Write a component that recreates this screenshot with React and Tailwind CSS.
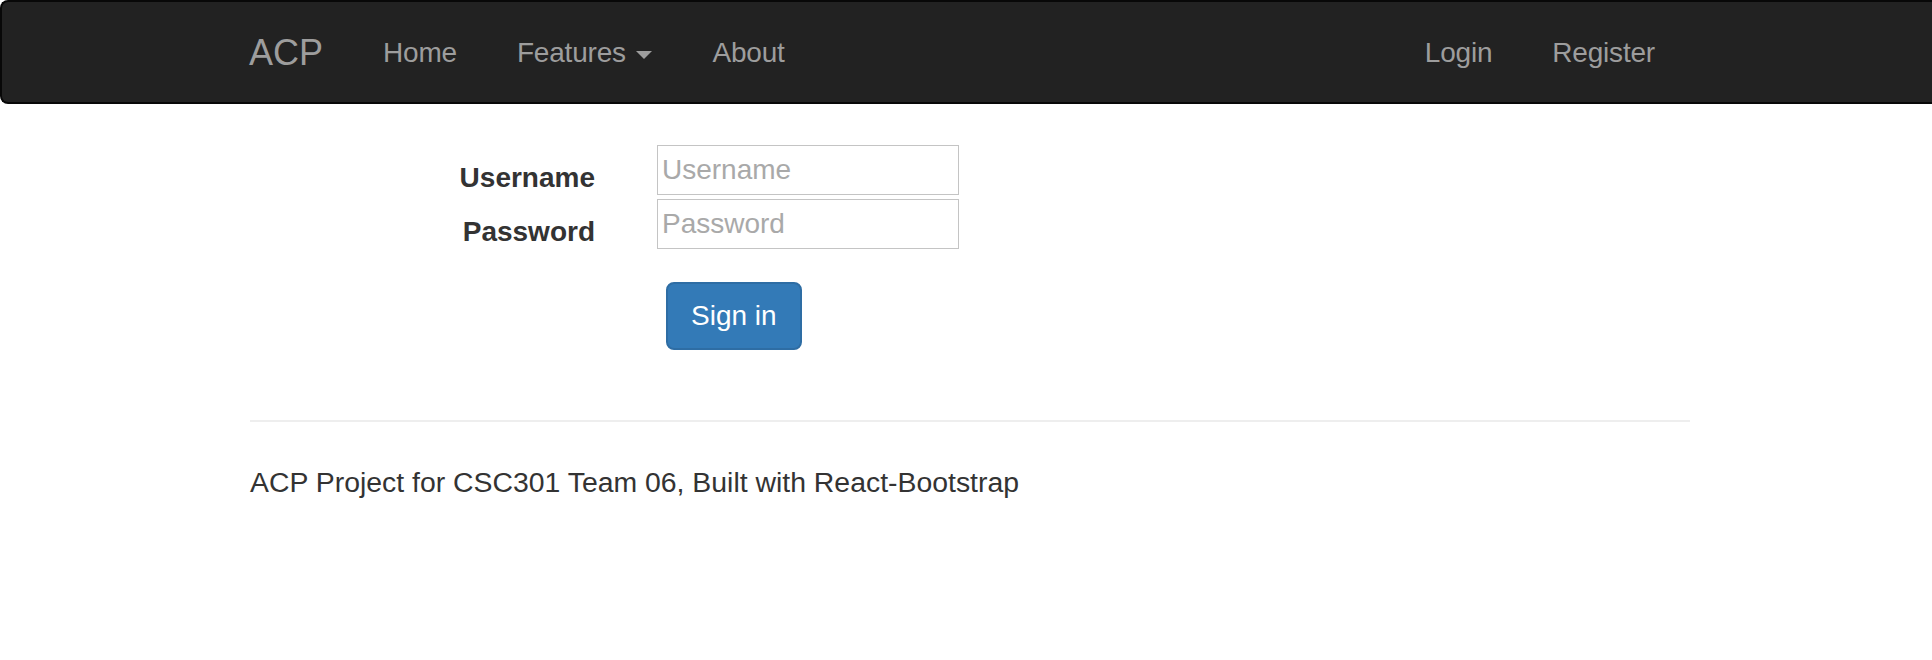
import { Fragment } from "react";

const leftLinks = [
  { label: "Home" },
  { label: "Features", dropdown: true },
  { label: "About" },
];

const rightLinks = [{ label: "Login" }, { label: "Register" }];

function NavLink({ label, dropdown }) {
  return (
    <li>
      <a
        href="#"
        className="block px-[30px] pt-[31px] pb-[29px] text-[28px] leading-[40px] tracking-[-0.2px] text-[#9d9d9d] no-underline"
      >
        {label}
        {dropdown ? (
          <Fragment>
            {" "}
            <span className="ml-[3px] inline-block h-0 w-0 border-x-[8px] border-t-[8px] border-x-transparent border-t-[#9d9d9d] align-middle" />
          </Fragment>
        ) : null}
      </a>
    </li>
  );
}

function Navbar() {
  return (
    <nav className="h-[104px] rounded-l-[8px] border-2 border-r-0 border-[#080808] bg-[#222]">
      <div className="ml-[217px] flex w-[1496px] px-[30px]">
        <a
          href="#"
          className="-ml-[30px] block h-[100px] px-[30px] pt-[31px] pb-[29px] text-[36px] leading-[40px] text-[#9d9d9d] no-underline"
        >
          ACP
        </a>
        <ul className="flex">
          {leftLinks.map((link) => (
            <NavLink key={link.label} {...link} />
          ))}
        </ul>
        <ul className="ml-auto flex">
          {rightLinks.map((link) => (
            <NavLink key={link.label} {...link} />
          ))}
        </ul>
      </div>
    </nav>
  );
}

function Field({ id, label, type }) {
  return (
    <div className="flex h-[50px] items-start">
      <label
        htmlFor={id}
        className="w-[345px] pt-[13px] text-right text-[28px] font-bold leading-[40px] text-[#333]"
      >
        {label}
      </label>
      <input
        id={id}
        type={type}
        placeholder={label}
        className="ml-[62px] h-[50px] w-[302px] border border-[#c4c4c4] bg-white px-[4px] text-[28px] text-[#333] outline-none placeholder:text-[#a9a9a9]"
      />
    </div>
  );
}

export default function App() {
  return (
    <div className="min-h-screen bg-white font-['Liberation_Sans',Arial,Helvetica,sans-serif] text-[#333]">
      <Navbar />
      <main className="ml-[220px] w-[1500px] px-[30px] pt-[41px]">
        <form className="flex flex-col" onSubmit={(event) => event.preventDefault()}>
          <div className="flex flex-col gap-[4px]">
            <Field id="username" label="Username" type="text" />
            <Field id="password" label="Password" type="password" />
          </div>
          <div className="mt-[33px] pl-[416px]">
            <button
              type="submit"
              className="rounded-[8px] border-2 border-[#2e6da4] bg-[#337ab7] px-[23px] py-[12px] text-[28px] leading-[40px] text-white"
            >
              Sign in
            </button>
          </div>
        </form>
        <hr className="mt-[70px] border-0 border-t-2 border-[#eee]" />
        <p className="mt-[40px] text-[28.4px] leading-[40px] text-[#333]">
          ACP Project for CSC301 Team 06, Built with React-Bootstrap
        </p>
      </main>
    </div>
  );
}
